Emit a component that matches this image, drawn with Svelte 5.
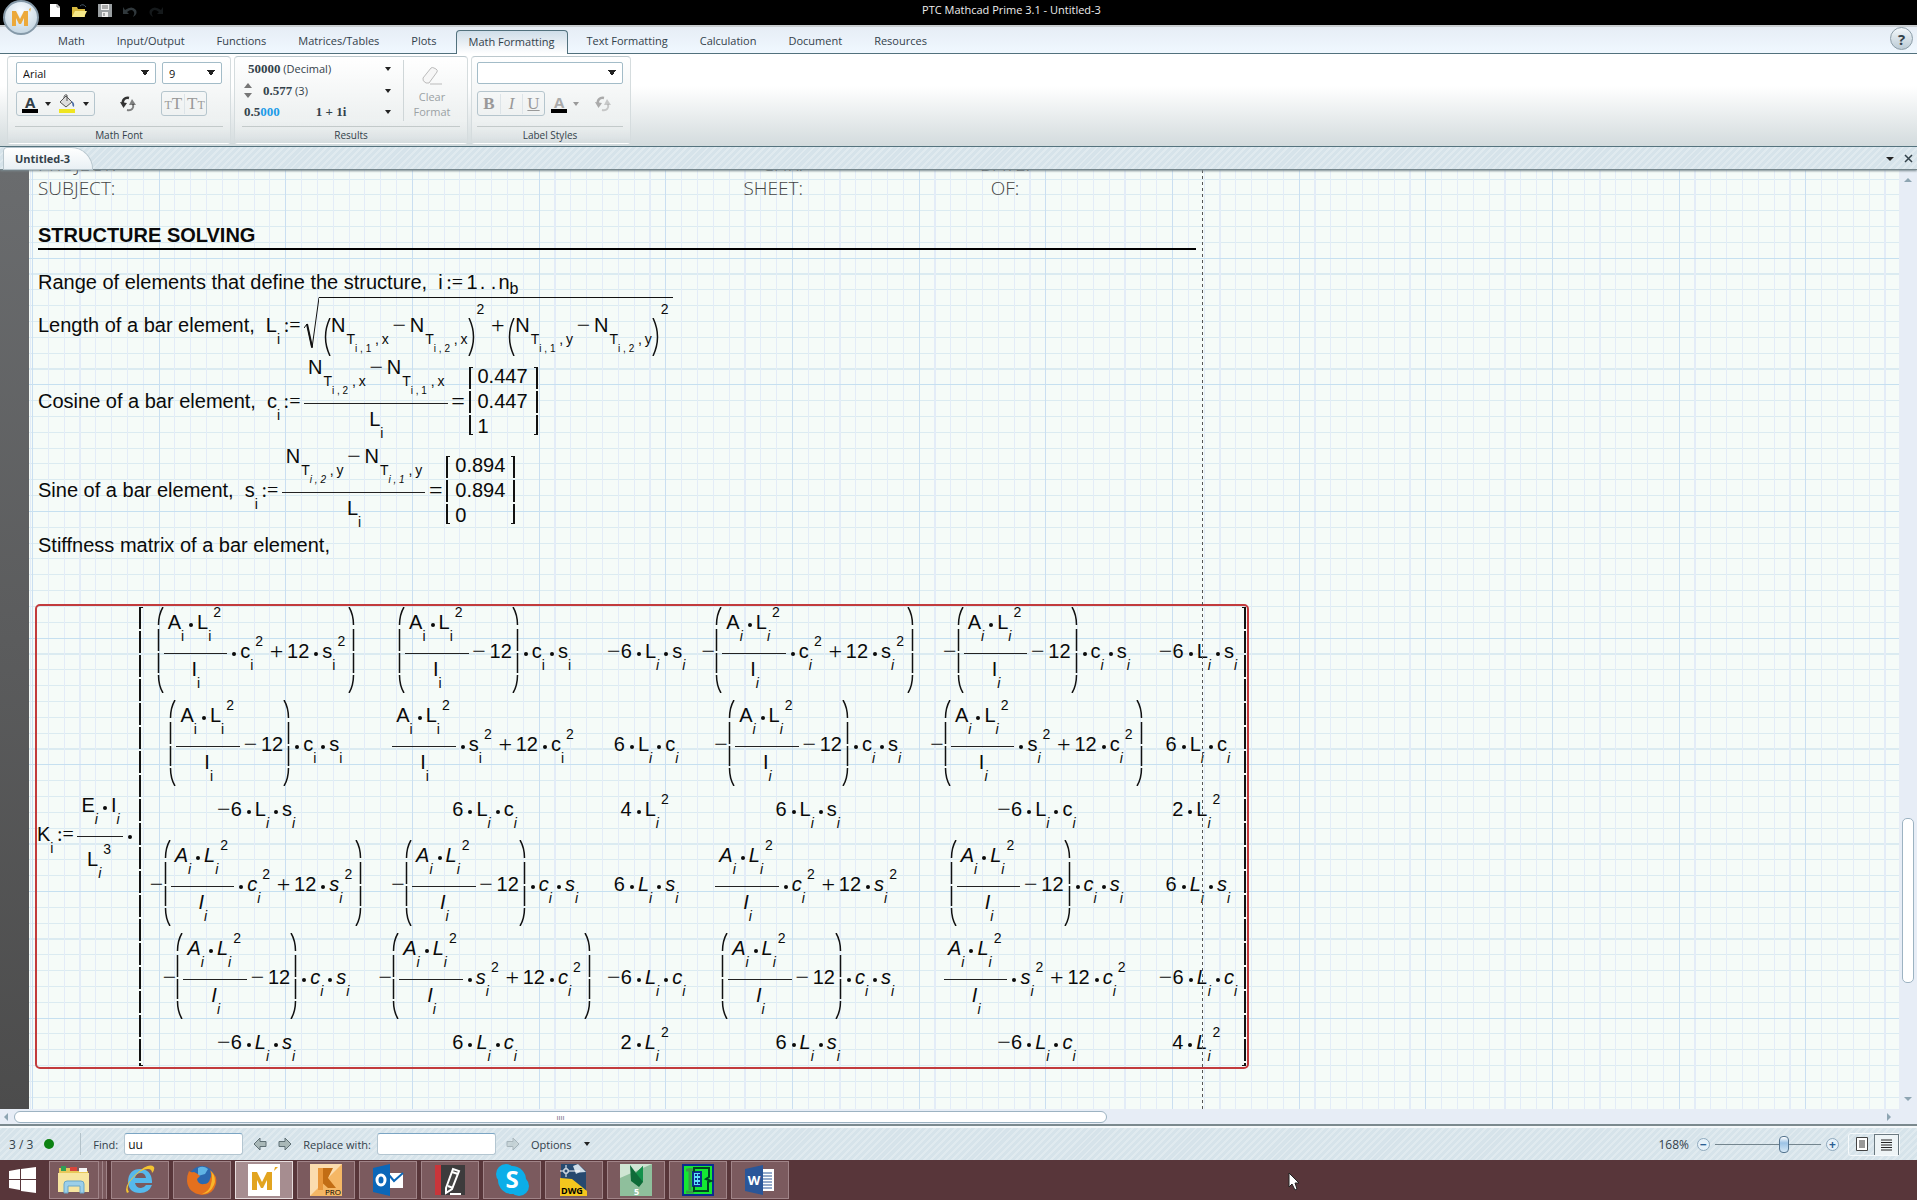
<script lang="ts">
	const tabs = [
		'Math',
		'Input/Output',
		'Functions',
		'Matrices/Tables',
		'Plots',
		'Math Formatting',
		'Text Formatting',
		'Calculation',
		'Document',
		'Resources'
	];
	let activeTab = $state('Math Formatting');
	let find = $state('uu');
	let replace = $state('');
	let zoom = $state(67);

	// F = A·L²/I fraction, ~ = unary minus, * = product dot, a trailing 2 = squared
	const matrix = [
		['( F * c2 + 12 * s2 )', '( F - 12 ) * c * s', '~ 6 * L * s', '~ ( F * c2 + 12 * s2 )', '~ ( F - 12 ) * c * s', '~ 6 * L * s'],
		['( F - 12 ) * c * s', 'F * s2 + 12 * c2', '6 * L * c', '~ ( F - 12 ) * c * s', '~ ( F * s2 + 12 * c2 )', '6 * L * c'],
		['~ 6 * L * s', '6 * L * c', '4 * L2', '6 * L * s', '~ 6 * L * c', '2 * L2'],
		['~ ( F * c2 + 12 * s2 )', '~ ( F - 12 ) * c * s', '6 * L * s', 'F * c2 + 12 * s2', '( F - 12 ) * c * s', '6 * L * s'],
		['~ ( F - 12 ) * c * s', '~ ( F * s2 + 12 * c2 )', '~ 6 * L * c', '( F - 12 ) * c * s', 'F * s2 + 12 * c2', '~ 6 * L * c'],
		['~ 6 * L * s', '6 * L * c', '2 * L2', '6 * L * s', '~ 6 * L * c', '4 * L2']
	];
	const apps = ['Internet Explorer', 'Firefox', 'Mathcad', 'Revit', 'Outlook', 'Notes', 'Skype', 'DWG', 'Robot', 'Section', 'Word'];
</script>

{#snippet v(name: string, sup = '')}
	<span class="t"><var>{name}</var><sub>i</sub>{#if sup}<sup>{sup}</sup>{/if}</span>
{/snippet}

{#snippet node(n: string, axis: string)}
	<span class="t">N<sub class="deep">T<sub>i , {n}</sub> ,&thinsp;{axis}</sub></span>
{/snippet}

{#snippet dot()}<span class="dot"></span>{/snippet}

{#snippet ratio()}
	<span class="frac">
		<span class="num">{@render v('A')}{@render dot()}{@render v('L', '2')}</span>
		<span class="bar"></span>
		<span class="den">{@render v('I')}</span>
	</span>
{/snippet}

{#snippet paren(right: boolean)}
	<svg class="paren" class:right viewBox="0 0 7 86" aria-hidden="true">
		<path d="M6 0C3 5 1.500 10 1.500 18M1.500 22V44M1.500 46V66M1.500 68C1.500 76 3 81 6 86" />
	</svg>
{/snippet}

{#snippet smallParen(right: boolean)}
	<svg class="paren small" class:right viewBox="0 0 7 38" aria-hidden="true">
		<path d="M6 0Q-3 19 6 38" />
	</svg>
{/snippet}

{#snippet expr(src: string)}
	{#each src.split(' ') as k}
		{#if k === 'F'}{@render ratio()}
		{:else if k === '*'}{@render dot()}
		{:else if k === '+' || k === '-'}<span class="t op">{k === '+' ? '+' : '−'}</span>
		{:else if k === '~'}<span class="t neg">−</span>
		{:else if k === '(' || k === ')'}{@render paren(k === ')')}
		{:else if /^\d+$/.test(k)}<span class="t">{k}</span>
		{:else}{@render v(k[0], k[1] ?? '')}{/if}
	{/each}
{/snippet}

{#snippet vector(values: string[])}
	<span class="vector">
		<span class="bracket"></span>
		<span class="values">{#each values as n}<span class="t">{n}</span>{/each}</span>
		<span class="bracket right"></span>
	</span>
{/snippet}

{#snippet refresh()}
	<svg width="18" height="18" viewBox="0 0 18 18" aria-hidden="true">
		<path d="M10 3C6 2 3 5 4 9" fill="none" stroke="currentColor" stroke-width="2.500" />
		<path d="M1 7l3.500 6L8 8z" fill="currentColor" />
		<path d="M8 15c5 1 7-2 6-6" fill="none" stroke="currentColor" stroke-width="2" opacity=".6" />
		<path d="M17 10l-4-6-3 6z" fill="currentColor" opacity=".6" />
	</svg>
{/snippet}

{#snippet arrow(flip: boolean)}
	<svg class:flip width="14" height="14" viewBox="0 0 14 14" aria-hidden="true">
		<path d="M1 4.500h6V1l6 6-6 6V9.500H1z" fill="#a9b8b8" stroke="#5f6f74" />
	</svg>
{/snippet}

<div class="app">
	<header class="titlebar">
		<button class="orb" aria-label="Mathcad menu">
			<svg width="24" height="22" viewBox="0 0 24 22"><path d="M3 19V4h4l4 8 4-8h4v15h-4v-8l-3 6h-2l-3-6v8z" fill="#eca93a" /><path d="M20 2l2-1-1 4z" fill="#eca93a" /></svg>
		</button>
		<nav class="quick">
			<button aria-label="New"><svg width="12" height="15" viewBox="0 0 12 15"><path d="M1 1h7l3 3v10H1z" fill="#fff" /><path d="M8 1v3h3" fill="none" stroke="#888" /></svg></button>
			<button aria-label="Open"><svg width="17" height="15" viewBox="0 0 17 15"><path d="M1 4h5l1 2h7v8H1z" fill="#d8b93f" /><path d="M4 8h12l-3 6H1z" fill="#f6e98a" /><path d="M9 3q3-3 6 1" fill="none" stroke="#456" /></svg></button>
			<button aria-label="Save"><svg width="14" height="15" viewBox="0 0 14 15"><path d="M0 1h14v13H0z" fill="#9a9fa2" /><path d="M3 1h8v6H3zM4 9h6v5H4z" fill="#eee" /><path d="M4 3h6M4 5h6M6 10v3" stroke="#666" /></svg></button>
			<button aria-label="Undo"><svg width="16" height="14" viewBox="0 0 16 14"><path d="M1 3v7h6L5 8q5-4 7 0 1 2-1 5 5-3 3-7-4-5-11 0z" fill="#30383c" /></svg></button>
			<button aria-label="Redo"><svg width="16" height="14" viewBox="0 0 16 14"><path d="M15 3v7H9l2-2q-5-4-7 0-1 2 1 5-5-3-3-7 4-5 11 0z" fill="#15191b" /></svg></button>
		</nav>
		<h1>PTC Mathcad Prime 3.1 - Untitled-3</h1>
	</header>

	<nav class="tabs">
		{#each tabs as tab}
			<button class:active={tab === activeTab} onclick={() => (activeTab = tab)}>{tab}</button>
		{/each}
		<button class="help" aria-label="Help">?</button>
	</nav>

	<section class="ribbon">
		<div class="group font-group">
			<div class="group-body">
				<div class="row">
					<select class="family" aria-label="Font"><option>Arial</option></select>
					<select class="size" aria-label="Font size"><option>9</option></select>
				</div>
				<div class="row tools">
					<div class="set">
						<button class="letter" aria-label="Font colour">A</button><i class="caret"></i>
						<button class="bucket" aria-label="Highlight">
							<svg width="18" height="20" viewBox="0 0 18 20"><path d="M2 8l6-6 6 6-6 5z" fill="#ddd" stroke="#555" /><path d="M6 4q0-4 3-3v6" fill="none" stroke="#555" /><path d="M13 7q4 1 3 6-2-1-2-4z" fill="#4d6ea8" /><path d="M1 15h16v4H1z" fill="#efe522" /></svg>
						</button><i class="caret"></i>
					</div>
					<button class="flat" aria-label="Reset font">{@render refresh()}</button>
					<div class="set tt"><button disabled><small>T</small>T</button><button disabled>T<small>T</small></button></div>
				</div>
			</div>
			<h2>Math Font</h2>
		</div>

		<div class="group result-group">
			<div class="group-body results">
				<div class="formats">
					<button><span><b>50000</b> (Decimal)</span><i class="caret"></i></button>
					<button class="precision"><span class="spin"><i></i><i></i></span><span><b>0.577</b> (3)</span><i class="caret"></i></button>
					<button><b>0.5<em>000</em></b><b class="complex">1 + 1i</b><i class="caret"></i></button>
				</div>
				<button class="clear" disabled>
					<svg width="24" height="20" viewBox="0 0 24 20"><path d="M3 12L11 2q1-1 3 0l2 1q2 1 1 3L9 17H6q-4-2-3-5z" fill="#f6f6f6" stroke="#bbb" /><path d="M10 18h12" stroke="#bbb" /></svg>
					<span>Clear<br />Format</span>
				</button>
			</div>
			<h2>Results</h2>
		</div>

		<div class="group label-group">
			<div class="group-body">
				<div class="row"><select class="styles" aria-label="Label style"><option></option></select></div>
				<div class="row tools">
					<div class="set biu"><button disabled><b>B</b></button><button disabled><i>I</i></button><button disabled><u>U</u></button></div>
					<button class="letter" disabled aria-label="Label colour">A</button><i class="caret dim"></i>
					<button class="flat" disabled aria-label="Reset label">{@render refresh()}</button>
				</div>
			</div>
			<h2>Label Styles</h2>
		</div>
	</section>

	<div class="strip">
		<button class="doc-tab">Untitled-3</button>
		<div class="strip-end">
			<button aria-label="Documents"><i class="caret wide"></i></button>
			<button aria-label="Close"><svg width="9" height="9" viewBox="0 0 9 9"><path d="M1 1l7 7M8 1L1 8" stroke="#33424a" stroke-width="1.500" /></svg></button>
		</div>
	</div>

	<main>
		<article class="sheet">
			<div class="head">
				<span>PROJECT:</span><span class="end">CHK:</span><span class="mid">DATE:</span>
				<span>SUBJECT:</span><span class="end">SHEET:</span><span class="mid">OF:</span>
			</div>
			<h3>STRUCTURE SOLVING</h3>

			<p class="line range">
				<span class="t text">Range of elements that define the structure,</span>
				<span class="t">i</span><span class="t let">:=</span><span class="t">1</span><span class="t dots">. .</span><span class="t">n<sub class="name">b</sub></span>
			</p>

			<p class="line">
				<span class="t text">Length of a bar element,</span>
				{@render v('L')}<span class="t let">:=</span>
				<svg class="root" width="15" height="60" viewBox="0 0 15 60" aria-hidden="true"><path d="M0 31l3-4 5 24L15 .5" /><path class="thick" d="M3 27l5 23" /></svg>
				<span class="radicand">
					{@render smallParen(false)}{@render node('1', 'x')}<span class="t op">−</span>{@render node('2', 'x')}{@render smallParen(true)}<span class="t power"><sup>2</sup></span>
					<span class="t op">+</span>
					{@render smallParen(false)}{@render node('1', 'y')}<span class="t op">−</span>{@render node('2', 'y')}{@render smallParen(true)}<span class="t power"><sup>2</sup></span>
				</span>
			</p>

			<p class="line quotient">
				<span class="t text">Cosine of a bar element,</span>
				{@render v('c')}<span class="t let">:=</span>
				<span class="frac">
					<span class="num">{@render node('2', 'x')}<span class="t op">−</span>{@render node('1', 'x')}</span>
					<span class="bar"></span>
					<span class="den">{@render v('L')}</span>
				</span>
				<span class="t op">=</span>{@render vector(['0.447', '0.447', '1'])}
			</p>

			<p class="line quotient slanted">
				<span class="t text">Sine of a bar element,</span>
				{@render v('s')}<span class="t let">:=</span>
				<span class="frac">
					<span class="num">{@render node('2', 'y')}<span class="t op">−</span>{@render node('1', 'y')}</span>
					<span class="bar"></span>
					<span class="den">{@render v('L')}</span>
				</span>
				<span class="t op">=</span>{@render vector(['0.894', '0.894', '0'])}
			</p>

			<p class="line"><span class="t">Stiffness matrix of a bar element,</span></p>

			<div class="stiffness">
				{@render v('K')}<span class="t let">:=</span>
				<span class="frac it-sub factor">
					<span class="num">{@render v('E')}{@render dot()}{@render v('I')}</span>
					<span class="bar"></span>
					<span class="den">{@render v('L', '3')}</span>
				</span>
				{@render dot()}
				<span class="bracket tall"></span>
				<div class="matrix">
					{#each matrix as row, r}
						{#each row as cell, c}
							<span class="cell" class:big={cell.includes('F')} class:low={r % 3 === 2} class:it-sub={r > 1 || c > 1} class:it={r > 2}>{@render expr(cell)}</span>
						{/each}
					{/each}
				</div>
				<span class="bracket tall right"></span>
			</div>
			<div class="page-edge"></div>
		</article>
		<div class="vscroll"><i class="up"></i><span class="thumb"></span><i class="down"></i></div>
	</main>

	<div class="hscroll"><i class="left"></i><span class="thumb">ıııı</span><i class="right"></i></div>

	<footer class="status">
		<span class="count">3 / 3</span><span class="led"></span><span class="sep"></span>
		<label for="find">Find:</label><input id="find" type="text" bind:value={find} />
		<button aria-label="Find previous">{@render arrow(true)}</button>
		<button aria-label="Find next">{@render arrow(false)}</button>
		<label for="replace">Replace with:</label><input id="replace" type="text" bind:value={replace} />
		<button disabled aria-label="Replace">{@render arrow(false)}</button>
		<button class="options">Options <i class="caret"></i></button>
		<div class="zoom">
			<label for="zoom">168%</label>
			<button class="round" aria-label="Zoom out">−</button>
			<input id="zoom" type="range" min="0" max="100" bind:value={zoom} />
			<button class="round" aria-label="Zoom in">+</button>
			<div class="views">
				<button aria-label="Page view"><svg width="12" height="14" viewBox="0 0 12 14"><path d="M.5.500h11v13H.5z" fill="#fff" stroke="#444" /><path d="M3 4h6M3 6h6M3 8h6M3 10h6" stroke="#333" /></svg></button>
				<button class="on" aria-label="Draft view"><svg width="11" height="12" viewBox="0 0 11 12"><path d="M0 1h11M0 3.500h11M0 6h11M0 8.500h11M0 11h11" stroke="#222" /></svg></button>
			</div>
		</div>
	</footer>

	<nav class="taskbar">
		<button class="start" aria-label="Start"><svg width="27" height="26" viewBox="0 0 27 26"><path d="M0 4l11-2v10H0zM12 2l15-2v12H12zM0 13h11v10L0 21zM12 13h15v13l-15-2z" fill="#fff" /></svg></button>
		<button class="task stack" aria-label="File Explorer">
			<svg width="34" height="30" viewBox="0 0 34 30"><path d="M2 3h12l2 3h15v20H2z" fill="#e7c75a" /><path d="M4 1h5v5H4z" fill="#2f9e56" /><path d="M13 2h7v4h-7z" fill="#d8453a" /><path d="M22 3h8v4h-8z" fill="#f5f5f5" /><path d="M1 8h31v19H1z" fill="#f7e5a0" /><path d="M7 28v-9q0-3 3-3h14q3 0 3 3v9h-4v-7H11v7z" fill="#9ccfe9" stroke="#6aa7c9" /></svg>
		</button>
		{#each apps as app}
			<button class="task" class:current={app === 'Mathcad'} aria-label={app}>
				{#if app === 'Internet Explorer'}
					<svg width="32" height="32" viewBox="0 0 32 32"><path d="M16 5q11 0 12 12v2H11q1 5 6 5 3 0 5-3h6q-3 8-12 8Q4 29 4 17 5 5 16 5zM11 14h11q-1-5-5-5-5 0-6 5z" fill="#56b9ec" /><path d="M3 29Q-1 22 12 10T30 3q1 3-2 6 0-4-4-4-7 0-15 9T5 28z" fill="#f3c331" /></svg>
				{:else if app === 'Firefox'}
					<svg width="32" height="32" viewBox="0 0 32 32"><circle cx="16" cy="15" r="13" fill="#2b69b0" /><path d="M12 4q5-3 10 1l-3 5-7 2z" fill="#5fb4e4" /><path d="M3 7q2 2 5 1 3 1 6 4l-3 3q1 6 7 5 5 0 6-5 2-3 0-9 8 6 6 14-3 11-14 11Q2 29 1 17 1 11 3 7z" fill="#e4701e" /><path d="M25 7q6 7 3 14-4 9-12 9 8-3 9-10 2-7 0-13z" fill="#f8b62b" /></svg>
				{:else if app === 'Mathcad'}
					<svg width="32" height="32" viewBox="0 0 32 32"><path d="M0 0h32v32H0z" fill="#fff" /><path d="M4 26V8h5l5 10 5-10h5v18h-5V16l-4 8h-2l-4-8v10zM26 7l1-4h3z" fill="#e2a420" /></svg>
				{:else if app === 'Revit'}
					<svg width="32" height="32" viewBox="0 0 32 32"><path d="M0 0h32v32H0z" fill="#f5b765" /><path d="M0 0h32L0 32z" fill="#fbdcae" /><path d="M8 4h15l-5 10 8 10h-8L8 15z" fill="#c26d14" /><path d="M8 4h5v22H8z" fill="#e8963a" /><text x="31" y="31" text-anchor="end" font-size="8">PRO</text></svg>
				{:else if app === 'Outlook'}
					<svg width="32" height="32" viewBox="0 0 32 32"><path d="M17 9h14v15H17z" fill="#fff" /><path d="M17 11l5 6 9-8" fill="none" stroke="#0b67b8" stroke-width="2" /><path d="M1 4l17-4v32L1 28z" fill="#0b67b8" /><ellipse cx="9" cy="16" rx="4" ry="5" fill="none" stroke="#fff" stroke-width="3" /></svg>
				{:else if app === 'Notes'}
					<svg width="32" height="32" viewBox="0 0 32 32"><path d="M1 1h30v30H1z" fill="#3d3b3c" /><path d="M1 1h6v30H1z" fill="#c9353a" /><path d="M12 24L19 5l6 2-7 18-6 4z" fill="#444" stroke="#fff" stroke-width="2" /><path d="M18 8l6 2M14 22l5 2M16 30h11" stroke="#fff" stroke-width="2" /></svg>
				{:else if app === 'Skype'}
					<svg width="34" height="32" viewBox="0 0 34 32"><circle cx="11" cy="10" r="10" fill="#0caee8" /><circle cx="24" cy="22" r="10" fill="#0caee8" /><circle cx="17" cy="16" r="14" fill="#0caee8" /><text x="17" y="24" text-anchor="middle" font-size="24" font-weight="bold" fill="#fff">S</text></svg>
				{:else if app === 'DWG'}
					<svg width="30" height="32" viewBox="0 0 30 32"><path d="M2 0h17l8 7v24H2z" fill="#26496f" /><path d="M19 0l8 8q-8 0-10 2L14 2z" fill="#cfdde8" /><path d="M1 14l12 1 15 12v5H1z" fill="#f4c61e" /><path d="M1 7h20M7 1v12" stroke="#fff" /><path d="M5 5h4v4H5z" fill="#26496f" stroke="#fff" /><text x="2" y="30" font-size="9" font-weight="bold">DWG</text></svg>
				{:else if app === 'Robot'}
					<svg width="32" height="32" viewBox="0 0 32 32"><path d="M0 0h32v32H0z" fill="#8fbf9c" /><path d="M0 0h32L0 14z" fill="#cfe5d3" /><path d="M10 1l6 8 7-7v16l-4 5-8-6z" fill="#0e6b38" /><path d="M16 9l7-7v16z" fill="#14914b" /><text x="14" y="31" font-size="9" font-weight="bold" fill="#fff">5</text></svg>
				{:else if app === 'Section'}
					<svg width="32" height="32" viewBox="0 0 32 32"><path d="M1 1h30v30H1z" fill="#14e833" stroke="#0b2c8e" stroke-width="2" /><path d="M8 4v22M4 6h8M4 28h8" stroke="#3a9b48" stroke-width="3" /><path d="M11 8h8v14h-8z" fill="#5ce0f8" stroke="#0b2c8e" stroke-width="2" /><path d="M14 10v10M17 10v10" stroke="#0b2c8e" stroke-width="2" stroke-dasharray="2" /><path d="M12 8V4h15v9l-3 2 5 2-3 1v9H12v-5" fill="none" stroke="#042" stroke-width="2" /></svg>
				{:else}
					<svg width="30" height="30" viewBox="0 0 30 30"><path d="M15 4h14v22H15z" fill="#fff" /><path d="M17 8h10M17 11h10M17 14h10M17 17h10M17 20h10M17 23h10" stroke="#2a5699" /><path d="M0 4l18-4v30L0 26z" fill="#2a5699" /><text x="9" y="20" text-anchor="middle" font-size="13" font-weight="bold" fill="#fff">W</text></svg>
				{/if}
			</button>
		{/each}
		<svg class="cursor" width="13" height="20" viewBox="0 0 13 20" aria-hidden="true"><path d="M1 1v14l3-3 3 6 2-1-2-6h4z" fill="#fff" stroke="#222" /></svg>
	</nav>
</div>

<style>
	:global(body) {
		margin: 0;
	}
	.app {
		height: 100vh;
		min-height: 600px;
		display: flex;
		flex-direction: column;
		overflow: hidden;
		font: 11px 'Open Sans', sans-serif;
		color: #33414a;
		--hatch: repeating-linear-gradient(135deg, #e0eaef 0 2px, #d6e3ea 2px 5px);
	}
	button {
		display: flex;
		align-items: center;
		padding: 0;
		border: 0;
		background: none;
		color: inherit;
		font: inherit;
	}
	input,
	select {
		box-sizing: border-box;
		color: #111;
		font: inherit;
	}
	.caret {
		border: 3px solid transparent;
		border-top: 4px solid #222;
		border-bottom: 0;
	}
	.caret.dim {
		border-top-color: #999;
	}
	.caret.wide {
		border-width: 4px 4px 0;
	}

	.titlebar {
		position: relative;
		height: 25px;
		display: flex;
		align-items: center;
		background: #000;
		color: #eee;
	}
	.titlebar h1 {
		flex: 1;
		margin: 0 70px 6px 20px;
		font-size: 11px;
		font-weight: 400;
		text-align: center;
	}
	.quick {
		display: flex;
		align-items: center;
		gap: 10px;
		width: 156px;
		padding: 0 0 4px 49px;
		box-sizing: border-box;
	}
	.orb {
		position: absolute;
		left: 3px;
		top: 0;
		z-index: 2;
		width: 36px;
		height: 35px;
		justify-content: center;
		border: 2px solid #8599a8;
		border-radius: 50%;
		background: radial-gradient(circle at 50% 30%, #f8fcff, #b9cddb);
	}

	.tabs {
		height: 26px;
		display: flex;
		align-items: flex-end;
		gap: 6px;
		padding-left: 45px;
		border-top: 2px solid #c9cdd0;
		border-bottom: 1px solid #52717d;
		background: linear-gradient(#e6edf5, #f0f8ff);
	}
	.tabs button {
		height: 24px;
		padding: 0 12px 2px;
		border: 1px solid transparent;
		border-bottom: 0;
		border-radius: 4px 4px 0 0;
	}
	.tabs .active {
		border-color: #52717d;
		margin-bottom: -1px;
		background: linear-gradient(#cfdde8, #fff);
	}
	.tabs .help {
		width: 23px;
		height: 23px;
		margin: 0 4px 3px auto;
		padding: 0;
		justify-content: center;
		border: 1px solid #8b9ca6;
		border-radius: 50%;
		background: linear-gradient(#f3f8fb, #bccbd5);
		font-size: 15px;
		font-weight: 700;
	}

	.ribbon {
		height: 92px;
		display: flex;
		gap: 3px;
		padding-left: 7px;
		border-bottom: 1px solid #52717d;
		background: linear-gradient(#fff 35%, #d3dbdd);
	}
	.group {
		display: flex;
		flex-direction: column;
		box-sizing: border-box;
		height: 88px;
		margin-top: 2px;
		padding: 5px 7px 0;
		border: 1px solid #bcc8cd;
		border-color: #bcc8cd #d5dcde transparent;
		border-radius: 4px;
		background: linear-gradient(#fff, #eef1f1 70%, transparent);
	}
	.font-group {
		width: 224px;
	}
	.result-group {
		width: 234px;
	}
	.label-group {
		width: 160px;
		padding-left: 5px;
	}
	.group-body {
		flex: none;
		height: 64px;
		border-bottom: 1px solid #c3caca;
	}
	.group h2 {
		margin: 1px 0 0;
		font-size: 10px;
		font-weight: 400;
		line-height: 14px;
		text-align: center;
	}
	.row {
		display: flex;
		gap: 6px;
	}
	.tools {
		align-items: center;
		margin-top: 7px;
	}
	select {
		appearance: none;
		height: 22px;
		padding: 0 6px;
		border: 1px solid #a3bcc8;
		border-radius: 2px;
		background:
			linear-gradient(to top right, transparent 50%, #222 50%) right 10px center / 4px 6px no-repeat,
			linear-gradient(to top left, transparent 50%, #222 50%) right 6px center / 4px 6px no-repeat,
			#fff;
	}
	.family {
		width: 140px;
	}
	.size {
		width: 60px;
	}
	.styles {
		width: 148px;
	}
	.set {
		display: flex;
		align-items: center;
		gap: 7px;
		height: 23px;
		padding: 0 5px;
		border: 1px solid #b5c5cd;
		border-radius: 3px;
	}
	.font-group .row {
		margin-left: 1px;
	}
	.letter {
		height: 18px;
		padding: 0 3px;
		border-bottom: 4px solid #000;
		font-size: 15px;
		font-weight: 700;
		line-height: 14px;
	}
	.letter:disabled {
		color: #aaa;
	}
	.flat {
		margin: 0 18px;
		color: #333;
	}
	.flat:disabled {
		margin: 0 9px;
		color: #aaa;
	}
	.tt,
	.biu {
		padding: 0;
		gap: 0;
		font-family: 'Liberation Serif', serif;
	}
	.tt button,
	.biu button {
		justify-content: center;
		align-items: baseline;
		width: 22px;
		color: #999;
		font-size: 17px;
	}
	.tt small {
		font-size: 12px;
	}
	.biu button + button,
	.tt button + button {
		border-left: 1px solid #dde4e8;
	}
	.results {
		display: flex;
	}
	.formats {
		flex: 1;
		display: flex;
		flex-direction: column;
		gap: 4px;
		padding: 0 12px 0 2px;
		border-right: 1px solid #cfd6d8;
		margin: -2px 0 5px;
	}
	.formats button {
		height: 18px;
		padding-left: 4px;
	}
	.formats button:last-child {
		padding-left: 0;
	}
	.formats b {
		font: bold 13px 'Liberation Serif', serif;
	}
	.formats em {
		color: #1b9be8;
		font-style: normal;
	}
	.formats .caret {
		margin-left: auto;
	}
	.formats .complex {
		margin-left: 36px;
	}
	.formats .precision {
		padding-left: 0;
	}
	.spin {
		display: grid;
		gap: 5px;
		margin-right: 11px;
	}
	.spin i {
		border: 4px solid transparent;
		border-top: 5px solid #777;
		border-bottom: 0;
	}
	.spin i:first-child {
		transform: rotate(180deg);
	}
	.clear {
		flex-direction: column;
		gap: 3px;
		width: 56px;
		padding-top: 4px;
		color: #9ba1a4;
		line-height: 15px;
		justify-content: flex-start;
	}

	.strip {
		height: 21px;
		display: flex;
		justify-content: space-between;
		padding-top: 1px;
		border-bottom: 1px solid #76868c;
		background: var(--hatch);
		z-index: 1;
		box-shadow: 0 1px 2px #7a8a90;
	}
	.doc-tab {
		width: 88px;
		margin-left: 4px;
		padding-left: 11px;
		border-radius: 4px 24px 0 0;
		background: linear-gradient(#fff, #e9f0f4);
		box-shadow: 0 0 0 1px #b8c6cd;
		font-weight: 700;
	}
	.strip-end {
		display: flex;
		gap: 10px;
		padding-right: 4px;
	}

	main {
		flex: 1;
		min-height: 0;
		display: flex;
		overflow: hidden;
		background: linear-gradient(#6a6c6e, #4c4c4c);
	}
	.sheet {
		--cell: calc(950px / 60);
		--major: calc(950px / 60 * 8);
		position: relative;
		flex: 1;
		min-width: 0;
		overflow: hidden;
		margin-left: 29px;
		padding-left: 9px;
		background:
			repeating-linear-gradient(to right, #cadff1 0 1px, transparent 1px var(--major)) 3px 0,
			repeating-linear-gradient(#c6e0f0 0 1px, transparent 1px var(--major)) 0 -39px / 100% 1200px,
			repeating-linear-gradient(to right, #e3ecf7 0 1px, transparent 1px var(--cell)) 3px 0,
			repeating-linear-gradient(#dbebf1 0 1px, transparent 1px var(--cell)) 0 -39px / 100% 1200px,
			#f5fbf8;
		font: 20px/20px 'Liberation Sans', Arial, sans-serif;
		color: #0a0a0a;
	}
	.page-edge {
		position: absolute;
		left: 1173px;
		top: 0;
		bottom: 0;
		width: 1px;
		background: repeating-linear-gradient(#555 0 3px, transparent 3px 6px);
	}
	.head {
		display: grid;
		grid-template-columns: 698px 67px 1fr;
		margin-top: -18px;
		font: 19px/24px 'Open Sans', sans-serif;
		font-weight: 300;
		color: #444;
	}
	.head .end {
		text-align: right;
	}
	.head .mid {
		width: 60px;
		margin-left: 172px;
		text-align: center;
	}
	h3 {
		width: 1158px;
		margin: 24px 0 22px;
		padding-bottom: 2px;
		line-height: 22px;
		font-size: 20px;
		border-bottom: 2px solid #000;
	}
	.line {
		display: flex;
		align-items: center;
		margin: 0;
	}
	.quotient {
		margin-bottom: -4px;
	}

	/* every maths box is centred on the fraction axis, 4px above the baseline */
	.t {
		flex: none;
		height: 20px;
		line-height: 20px;
		padding-bottom: 5px;
		white-space: pre;
	}
	.text {
		margin-right: 11px;
	}
	var {
		font-style: normal;
	}
	sub,
	sup {
		font-size: 14px;
		line-height: 0;
	}
	sub {
		vertical-align: -12px;
	}
	sup {
		vertical-align: 12px;
		margin: 0 3px 0 2px;
	}
	.deep {
		margin-left: 1px;
	}
	.deep sub {
		font-size: 10px;
		vertical-align: -8px;
	}
	.name {
		font-size: 16px;
		vertical-align: -5px;
	}
	.power {
		padding-bottom: 17px;
	}
	.slanted .deep sub,
	.it-sub sub,
	.it var {
		font-style: italic;
	}
	.op,
	.neg,
	.let {
		font-family: 'Liberation Serif', serif;
		text-align: center;
	}
	.op,
	.neg {
		font-size: 24px;
	}
	.op {
		width: 21px;
	}
	.neg {
		width: 14px;
	}
	.let {
		width: 24px;
	}
	.dots {
		margin: 0 2px;
	}
	.dot {
		flex: none;
		width: 4px;
		height: 4px;
		margin: 0 4px 0 5px;
		border-radius: 50%;
		background: #0a0a0a;
	}
	.frac {
		display: inline-grid;
		grid-template-rows: 1fr 1px 1fr;
		justify-items: center;
	}
	.bar {
		justify-self: stretch;
		background: #222;
	}
	.num,
	.den {
		display: flex;
		align-items: center;
		padding: 0 3px 0 4px;
	}
	.num {
		align-self: end;
		padding-top: 5px;
		padding-bottom: 16px;
	}
	.quotient .num {
		padding-top: 0;
		padding-bottom: 21px;
	}
	.den {
		align-self: start;
		padding-top: 5px;
	}
	.factor .den {
		padding-top: 12px;
	}
	.paren {
		flex: none;
		width: 7px;
		height: 86px;
		margin-bottom: 7px;
		fill: none;
		stroke: #111;
		stroke-width: 1.5;
	}
	.paren.small {
		height: 38px;
		margin: 18px 0 0;
	}
	svg.right {
		transform: scaleX(-1);
	}
	.root {
		fill: none;
		stroke: #111;
	}
	.root .thick {
		stroke-width: 2;
	}
	.radicand {
		display: flex;
		align-items: center;
		height: 59px;
		padding: 0 1px 0 5px;
		border-top: 1px solid #111;
	}
	.vector {
		display: flex;
	}
	.values {
		display: grid;
		padding: 0 6px 0 5px;
	}
	.bracket {
		flex: none;
		width: 4px;
		margin: 1px 0 6px;
		background:
			linear-gradient(#111, #111) top / 100% 1px no-repeat,
			linear-gradient(#111, #111) bottom / 100% 1px no-repeat,
			repeating-linear-gradient(#111 0 22px, transparent 22px 24px) left / 2px 100% no-repeat;
	}
	.bracket.right {
		background-position: top, bottom, right;
	}
	.bracket.tall {
		align-self: stretch;
		margin: 0 0 0 3px;
	}
	.bracket.tall.right {
		margin: 0;
	}
	.stiffness {
		display: flex;
		align-items: center;
		width: max-content;
		margin: 44px 0 0 -3px;
		padding: 1px 1px 1px 0;
		border: 2px solid #c23a3c;
		border-radius: 5px;
	}
	.matrix {
		display: grid;
		grid-template-columns: repeat(6, auto);
		justify-items: center;
		align-items: center;
		gap: 7px 16px;
		padding: 0 5px 0 7px;
	}
	.cell {
		display: flex;
		align-items: center;
	}
	.cell.big {
		margin-bottom: -7px;
	}
	.cell:not(.big) {
		padding-top: 7px;
	}
	.cell.low {
		padding: 6px 0 9px;
	}

	.vscroll {
		display: flex;
		flex-direction: column;
		align-items: center;
		width: 18px;
		padding: 8px 0;
		box-sizing: border-box;
		background: #e7edf6;
	}
	.vscroll .thumb {
		width: 10px;
		height: 163px;
		margin: auto 0 114px;
		border: 1px solid #9db3c2;
		border-radius: 5px;
		background: #fff;
	}
	.vscroll i,
	.hscroll i {
		border: 4px solid transparent;
	}
	.vscroll .up {
		margin-top: -4px;
		border-bottom-color: #8ea5b2;
	}
	.vscroll .down {
		margin-bottom: -4px;
		border-top-color: #8ea5b2;
	}
	.hscroll {
		height: 15px;
		display: flex;
		align-items: center;
		padding: 0 22px 0 0;
		border-bottom: 2px solid #7b898e;
		background: #e7edf6;
	}
	.hscroll .thumb {
		width: 1091px;
		height: 10px;
		margin-right: auto;
		border: 1px solid #9db3c2;
		border-radius: 6px;
		background: #fff;
		color: #667;
		font-size: 8px;
		line-height: 9px;
		text-align: center;
	}
	.hscroll .left {
		border-right-color: #8ea5b2;
		margin-right: 6px;
	}
	.hscroll .right {
		border-left-color: #8ea5b2;
	}

	.status {
		height: 32px;
		display: flex;
		align-items: center;
		padding: 0 17px 0 9px;
		border-top: 2px solid #f4f8fa;
		background: var(--hatch);
		font-size: 12px;
	}
	.led {
		width: 10px;
		height: 10px;
		margin: 0 26px 0 11px;
		border-radius: 50%;
		background: #0c8212;
	}
	.sep {
		width: 1px;
		height: 22px;
		margin-right: 12px;
		background: #b3c2ca;
	}
	.status label {
		font-size: 11px;
		margin-right: 6px;
	}
	.status input[type='text'] {
		width: 119px;
		height: 22px;
		margin-right: 10px;
		padding: 0 3px;
		border: 1px solid #b4c6d1;
		border-top-color: #7ba5c4;
		border-radius: 3px;
		background: #fff;
		font-size: 12px;
	}
	.status > button {
		margin-right: 11px;
	}
	.status > button:disabled {
		opacity: 0.4;
	}
	.status > .options {
		gap: 12px;
		font-size: 11px;
	}
	.flip {
		transform: scaleX(-1);
	}
	.zoom {
		display: flex;
		align-items: center;
		margin-left: auto;
	}
	.zoom label {
		margin-right: 8px;
		font-size: 12px;
	}
	.round {
		width: 13px;
		height: 13px;
		justify-content: center;
		border: 1px solid #8fa9bd;
		border-radius: 50%;
		background: #e6f1f9;
		color: #2c5f93;
		font-weight: 700;
		line-height: 11px;
	}
	.zoom input {
		appearance: none;
		width: 106px;
		height: 18px;
		margin: 0 5px;
		background: linear-gradient(#74858e, #74858e) center / 100% 1px no-repeat;
	}
	.zoom input::-webkit-slider-thumb {
		appearance: none;
		width: 10px;
		height: 17px;
		border: 1px solid #55748f;
		border-radius: 4px;
		background: linear-gradient(#fff, #9cc3e6 40%, #d5e8f6);
	}
	.views {
		display: flex;
		margin-left: 9px;
		border: 1px solid #f6fafc;
		border-radius: 3px;
	}
	.views button {
		width: 25px;
		height: 21px;
		justify-content: center;
	}
	.views .on {
		border: 1px solid #6b7980;
		border-bottom: 0;
		background: #eef4f6;
	}

	.taskbar {
		position: relative;
		height: 40px;
		display: flex;
		align-items: center;
		gap: 4px;
		background: #58363a;
	}
	.start {
		margin: 0 9px 0 9px;
	}
	.task {
		box-sizing: border-box;
		width: 58px;
		height: 38px;
		justify-content: center;
		border: 1px solid #a08488;
		background: #7b5a5e;
	}
	.task text {
		font-family: 'Open Sans', sans-serif;
	}
	.stack {
		width: 50px;
		margin-right: 8px;
		box-shadow: 3px 0 #7b5a5e, 4px 0 #a08488, 7px 0 #7b5a5e, 8px 0 #a08488;
	}
	.current {
		border-color: #e6dcdd;
		background: #a68d90;
	}
	.cursor {
		position: absolute;
		left: 1288px;
		top: 12px;
	}
</style>
